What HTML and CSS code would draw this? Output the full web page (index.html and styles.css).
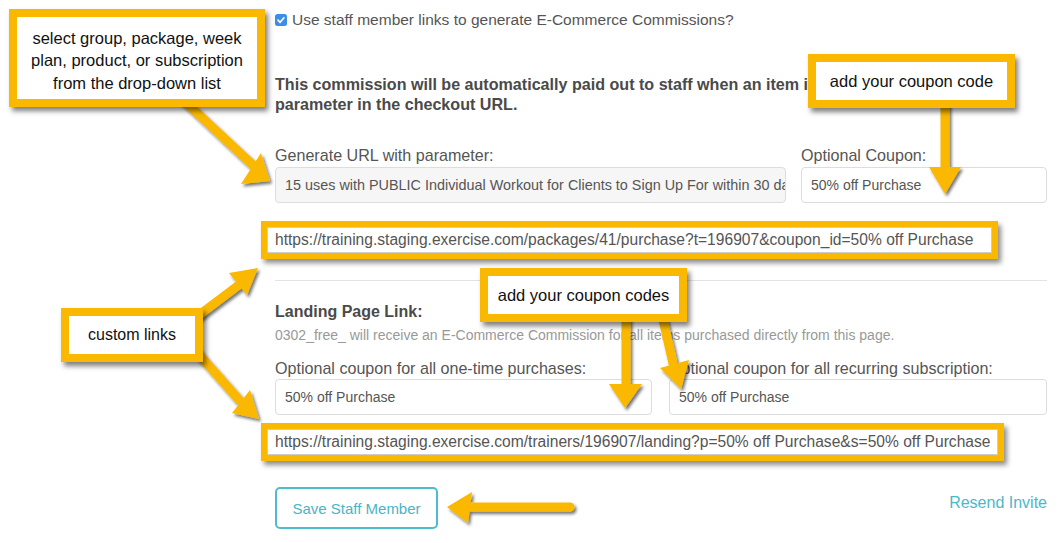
FILE: index.html
```html
<!DOCTYPE html>
<html>
<head>
<meta charset="utf-8">
<link rel="stylesheet" href="styles.css">
</head>
<body>
<div class="page">
  <main class="form">
    <label class="check">
      <span class="cb"><svg width="12" height="12" viewBox="0 0 12 12"><rect x="0" y="0" width="12" height="12" rx="2.5" fill="#3a8ee6"/><path d="M3 6.2 L5.1 8.3 L9 3.8" fill="none" stroke="#fff" stroke-width="1.7" stroke-linecap="round" stroke-linejoin="round"/></svg></span>
      <span>Use staff member links to generate E-Commerce Commissions?</span>
    </label>
    <p class="notice">This commission will be automatically paid out to staff when an item is purchased with this<br>parameter in the checkout URL.</p>

    <div class="row row-a">
      <div class="field">
        <div class="lbl">Generate URL with parameter:</div>
        <div class="input select">15 uses with PUBLIC Individual Workout for Clients to Sign Up For within 30 days</div>
      </div>
      <div class="field">
        <div class="lbl">Optional Coupon:</div>
        <div class="input">50% off Purchase</div>
      </div>
    </div>

    <div class="url url-a">https://training.staging.exercise.com/packages/41/purchase?t=196907&amp;coupon_id=50% off Purchase</div>

    <hr class="sep">

    <h4 class="sub">Landing Page Link:</h4>
    <p class="hint">0302_free_ will receive an E-Commerce Commission for all items purchased directly from this page.</p>

    <div class="row row-b">
      <div class="field">
        <div class="lbl">Optional coupon for all one-time purchases:</div>
        <div class="input">50% off Purchase</div>
      </div>
      <div class="field">
        <div class="lbl">Optional coupon for all recurring subscription:</div>
        <div class="input">50% off Purchase</div>
      </div>
    </div>

    <div class="url url-b">https://training.staging.exercise.com/trainers/196907/landing?p=50% off Purchase&amp;s=50% off Purchase</div>

    <div class="actions">
      <button class="btn">Save Staff Member</button>
      <a class="resend">Resend Invite</a>
    </div>
  </main>

  <svg class="arrows" width="1058" height="543" viewBox="0 0 1058 543">
    <defs>
      <filter id="sh" x="-20%" y="-20%" width="140%" height="140%">
        <feDropShadow dx="2" dy="2.5" stdDeviation="1.6" flood-color="#000" flood-opacity="0.55"/>
      </filter>
    </defs>
    <g fill="#fbb800" stroke="#fbb800" filter="url(#sh)">
      <line x1="180" y1="97" x2="254" y2="166" stroke-width="9"/>
      <polygon points="270,181 241,184 261,153" stroke="none"/>

      <line x1="945" y1="100" x2="945" y2="172" stroke-width="9"/>
      <polygon points="929,167 961,167 945,194" stroke="none"/>

      <line x1="195" y1="318" x2="240" y2="284" stroke-width="9"/>
      <polygon points="258,268 229,273 247,295" stroke="none"/>

      <line x1="195" y1="350" x2="241" y2="402" stroke-width="9"/>
      <polygon points="259,419 232,413 250,390" stroke="none"/>

      <line x1="626" y1="315" x2="626" y2="390" stroke-width="9"/>
      <polygon points="609,384 642,384 625,408" stroke="none"/>

      <line x1="662" y1="315" x2="674" y2="368" stroke-width="9"/>
      <polygon points="681,389 660,368 689,360" stroke="none"/>

      <line x1="570" y1="507" x2="466" y2="507" stroke-width="9" stroke-linecap="round"/>
      <polygon points="447,507 472,492 468,523" stroke="none"/>
    </g>
  </svg>

  <div class="callout c1">select group, package, week<br>plan, product, or subscription<br>from the drop-down list</div>
  <div class="callout c2">add your coupon code</div>
  <div class="callout c3">custom links</div>
  <div class="callout c4">add your coupon codes</div>
</div>
</body>
</html>
```

FILE: styles.css
```css
* { box-sizing: border-box; }
html, body { margin: 0; padding: 0; background: #fff; }
body { font-family: "Liberation Sans", Arial, sans-serif; color: #555; }

.page {
  position: relative;
  width: 1058px;
  height: 543px;
  overflow: hidden;
}

.form {
  margin-left: 275px;
  width: 772px;
  padding-top: 10px;
}

.check {
  display: flex;
  align-items: center;
  gap: 5px;
  font-size: 15.5px;
  line-height: 20px;
  height: 20px;
}
.cb { display: flex; }

.notice {
  margin: 44px 0 0;
  font-size: 16.1px;
  line-height: 20px;
  font-weight: bold;
  color: #4a4a4a;
  white-space: nowrap;
}

.row {
  display: grid;
}
.row-a {
  margin-top: 31px;
  grid-template-columns: 511px 246px;
  column-gap: 15px;
}
.row-b {
  margin-top: 14px;
  grid-template-columns: 377px 378px;
  column-gap: 17px;
}
.lbl {
  font-size: 16.1px;
  line-height: 20px;
  margin-bottom: 2px;
  white-space: nowrap;
}
.row-b .lbl { margin-bottom: 1px; }

.input {
  height: 36px;
  border: 1px solid #ddd;
  border-radius: 4px;
  background: #fff;
  padding: 0 9px;
  font-size: 14px;
  line-height: 34px;
  color: #555;
  white-space: nowrap;
  overflow: hidden;
}
.select { background: #f6f6f6; font-size: 14.4px; }

.url {
  margin-left: -8px;
  height: 26px;
  border: 1px solid #ccc;
  background: #fff;
  padding: 0 7px;
  font-size: 15.6px;
  line-height: 24px;
  color: #555;
  white-space: nowrap;
  box-shadow: 0 0 0 6px #fbb800, 3px 4px 5px 6px rgba(0,0,0,0.45);
}
.url-a { margin-top: 24px; width: 725px; }
.url-b { margin-top: 14px; width: 731px; }

.sep {
  margin: 27px 0 0;
  border: 0;
  border-top: 1px solid #e3e3e3;
  height: 0;
}

.sub {
  margin: 21px 0 0;
  font-size: 16px;
  line-height: 20px;
  font-weight: bold;
  color: #4a4a4a;
}
.hint {
  margin: 4px 0 0;
  font-size: 14px;
  line-height: 18px;
  color: #999;
  white-space: nowrap;
}

.actions {
  margin-top: 32px;
  display: flex;
  justify-content: space-between;
  align-items: flex-start;
}
.btn {
  width: 163px;
  height: 42px;
  border: 2px solid #4dbccc;
  border-radius: 5px;
  background: #fff;
  color: #4ab5c6;
  font-family: "Liberation Sans", Arial, sans-serif;
  font-size: 15px;
  padding: 0;
}
.resend {
  margin-top: 6px;
  font-size: 16px;
  line-height: 20px;
  color: #4ab8cc;
}

.arrows {
  position: absolute;
  left: 0;
  top: 0;
  z-index: 1;
  pointer-events: none;
}

.callout {
  position: absolute;
  z-index: 2;
  border: 8px solid #fbb800;
  background: #fff;
  color: #111;
  font-size: 16.5px;
  line-height: 22.5px;
  text-align: center;
  display: flex;
  align-items: center;
  justify-content: center;
  box-shadow: 3px 4px 5px rgba(0,0,0,0.5);
}
.c1 { left: 9px; top: 9px; width: 256px; height: 98px; padding-top: 5px; }
.c2 { left: 808px; top: 54px; width: 207px; height: 54px; }
.c3 { left: 61px; top: 308px; width: 142px; height: 54px; font-size: 16px; }
.c4 { left: 480px; top: 268px; width: 207px; height: 54px; }
```
